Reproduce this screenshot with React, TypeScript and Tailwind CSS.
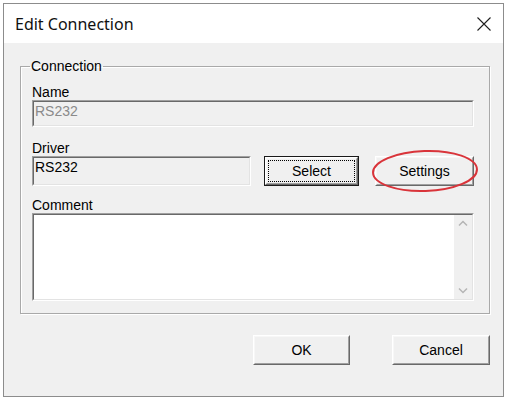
const sans = "font-['Liberation_Sans',Arial,sans-serif]";

function Raised({ label, focused, className }: { label: string; focused?: boolean; className: string }) {
  return (
    <div className={`${className} ${focused ? "border border-[#1a1a1a]" : ""} flex`}>
      <div className="flex-1 flex border border-t-white border-l-white border-r-[#696969] border-b-[#696969] bg-[#f0f0f0]">
        <div className="flex-1 flex border border-t-[#f7f7f7] border-l-[#f7f7f7] border-r-[#a0a0a0] border-b-[#a0a0a0] p-[1px]">
          <div
            className={`flex-1 flex items-center justify-center text-[14px] text-black ${
              focused ? "border border-dotted border-black" : ""
            }`}
          >
            {label}
          </div>
        </div>
      </div>
    </div>
  );
}

function Sunken({ children, className }: { children?: React.ReactNode; className: string }) {
  return (
    <div className={`${className} flex border border-t-[#a0a0a0] border-l-[#a0a0a0] border-r-white border-b-white`}>
      <div className="flex-1 flex border border-t-[#696969] border-l-[#696969] border-r-[#e3e3e3] border-b-[#e3e3e3]">
        {children}
      </div>
    </div>
  );
}

export default function App() {
  return (
    <div className={`w-[506px] h-[399px] bg-white overflow-hidden pt-[3px] pl-[3px] ${sans}`}>
      <div className="w-[501px] h-[394px] border border-[#8c8c8c] flex flex-col bg-[#f0f0f0]">
        {/* Title bar */}
        <div className="h-[39px] bg-white flex items-center justify-between pl-[11px] pr-[12px]">
          <span className="font-['Noto_Sans',sans-serif] text-[16px] text-[#111] leading-none">Edit Connection</span>
          <svg width="14" height="14" viewBox="0 0 14 14">
            <path d="M0.5 0.5 L13.5 13.5 M13.5 0.5 L0.5 13.5" stroke="#1f1f1f" strokeWidth="1.1" />
          </svg>
        </div>

        {/* Body */}
        <div className="flex flex-col pl-[16px]">
          <fieldset className="mt-[16px] w-[470px] border border-[#a9a9a9] shadow-[inset_1px_1px_0_#fff,1px_1px_0_#fff] pl-[11px] pr-[14px] pt-[11px] pb-[12px]">
            <legend className="ml-[-2px] px-[1px] text-[14px] leading-[14px] text-black">Connection</legend>

            <div className="text-[14px] leading-[16px] text-black">Name</div>
            <Sunken className="h-[27px] w-[442px] bg-[#f0f0f0]">
              <span className="pl-[1px] pt-[1px] text-[14px] leading-[16px] text-[#8a8a8a]">RS232</span>
            </Sunken>

            <div className="mt-[13px] text-[14px] leading-[16px] text-black">Driver</div>
            <div className="flex items-start h-[30px]">
              <Sunken className="h-[30px] w-[219px] bg-[#f0f0f0]">
                <span className="pl-[1px] pt-[1px] text-[14px] leading-[16px] text-black">RS232</span>
              </Sunken>
              <Raised label="Select" focused className="ml-[13px] h-[30px] w-[95px]" />
              <div className="relative ml-[16px]">
                <Raised label="Settings" className="h-[30px] w-[99px]" />
                <svg
                  className="absolute -left-[4px] -top-[8px] pointer-events-none"
                  width="108"
                  height="46"
                  viewBox="0 0 108 46"
                >
                  <ellipse
                    cx="54"
                    cy="23"
                    rx="52"
                    ry="20"
                    transform="rotate(-2 54 23)"
                    fill="none"
                    stroke="#d9343a"
                    strokeWidth="2"
                  />
                </svg>
              </div>
            </div>

            <div className="mt-[11px] text-[14px] leading-[16px] text-black">Comment</div>
            <Sunken className="h-[88px] w-[442px] bg-white">
              <div className="flex-1" />
              <div className="w-[18px] bg-[#f0f0f0] flex flex-col items-center justify-between py-[4px]">
                <svg width="12" height="8" viewBox="0 0 12 8">
                  <path d="M2 6.5 L6 2.5 L10 6.5" fill="none" stroke="#b4b4b4" strokeWidth="1.5" />
                </svg>
                <svg width="12" height="8" viewBox="0 0 12 8">
                  <path d="M2 1.5 L6 5.5 L10 1.5" fill="none" stroke="#b4b4b4" strokeWidth="1.5" />
                </svg>
              </div>
            </Sunken>
          </fieldset>

          <div className="mt-[21px] w-[470px] flex justify-end gap-[42px]">
            <Raised label="OK" className="h-[30px] w-[97px]" />
            <Raised label="Cancel" className="h-[30px] w-[98px]" />
          </div>
        </div>
      </div>
    </div>
  );
}
